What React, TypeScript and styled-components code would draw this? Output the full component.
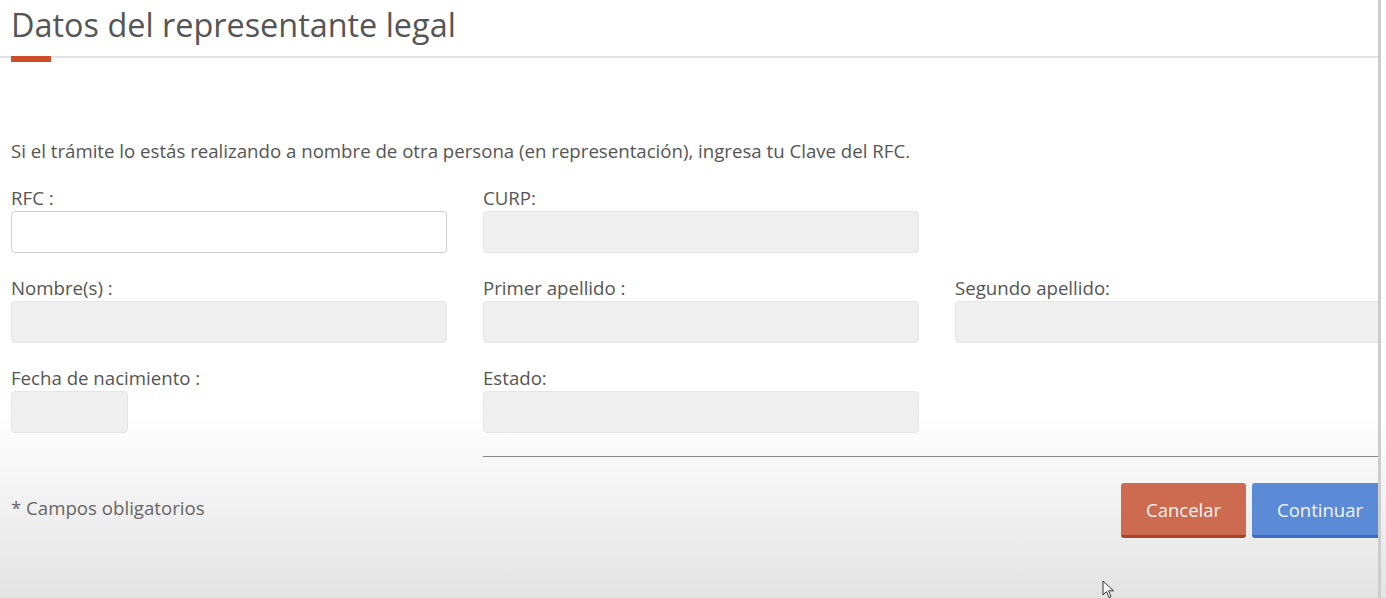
import React from "react";
import styled, { createGlobalStyle } from "styled-components";

const GlobalStyle = createGlobalStyle`
  html, body {
    margin: 0;
    padding: 0;
  }
  body {
    font-family: "Open Sans", "Liberation Sans", sans-serif;
    color: #555;
    background: linear-gradient(to bottom, #fff 0, #fff 410px, #f5f5f5 480px, #e3e3e3 598px);
    min-height: 598px;
  }
`;

const Page = styled.div`
  position: relative;
  width: 1381px;
  height: 598px;
  overflow: hidden;
  border-right: 3px solid #cdcdcd;
  box-sizing: border-box;
  padding-left: 11px;
`;

const Title = styled.h1`
  margin: 0;
  padding-top: 4px;
  font-size: 32.4px;
  font-weight: 400;
  line-height: 40px;
  color: #555;
`;

const TitleRule = styled.div`
  margin: 12px 0 0 -11px;
  height: 2px;
  background: #e3e3e3;
  display: flex;
  padding-left: 11px;
`;

const Accent = styled.span`
  width: 40px;
  height: 6px;
  background: #cc4d28;
`;

const Intro = styled.p`
  margin: 81px 0 0;
  font-size: 18.65px;
  line-height: 24px;
`;

const Grid = styled.div`
  display: grid;
  grid-template-columns: repeat(3, 436px);
  column-gap: 36px;
  row-gap: 23px;
  margin-top: 23px;
`;

const Field = styled.div<{ $col?: number }>`
  display: flex;
  flex-direction: column;
  grid-column: ${(p) => p.$col ?? "auto"};
`;

const Label = styled.label`
  font-size: 18.65px;
  line-height: 24px;
  margin-bottom: 1px;
  color: #555;
`;

const Input = styled.div<{ $disabled?: boolean; $width?: number }>`
  height: 42px;
  box-sizing: border-box;
  width: ${(p) => (p.$width ? `${p.$width}px` : "100%")};
  border-radius: 4px;
  border: 1px solid ${(p) => (p.$disabled ? "#e6e6e6" : "#cfcfcf")};
  background: ${(p) => (p.$disabled ? "#efefef" : "#fff")};
`;

const Rule = styled.hr`
  grid-column: 2 / 4;
  margin: 0;
  border: 0;
  border-top: 1px solid #8a8a8a;
`;

const Footer = styled.div`
  display: flex;
  align-items: center;
  justify-content: space-between;
  margin: 26px -10px 0 0;
`;

const Note = styled.span`
  font-size: 18.65px;
  line-height: 24px;
  padding-bottom: 6px;
  color: #666;
`;

const Actions = styled.div`
  display: flex;
  gap: 6px;
`;

const Button = styled.button<{ $tone: "cancel" | "go" }>`
  height: 55px;
  padding: 0 25px;
  border: 0;
  border-radius: 3px;
  font-family: "Open Sans", "Liberation Sans", sans-serif;
  font-size: 18.5px;
  color: #f4f4f4;
  background: ${(p) => (p.$tone === "go" ? "#5b8bd6" : "#cc6b50")};
  border-bottom: 3px solid ${(p) => (p.$tone === "go" ? "#3d6cc0" : "#a9442a")};
  cursor: pointer;
`;

const Cursor = styled.svg`
  position: absolute;
  left: 1102px;
  top: 580px;
`;

const App: React.FC = () => {
  return (
    <>
      <GlobalStyle />
      <Page>
        <Title>Datos del representante legal</Title>
        <TitleRule>
          <Accent />
        </TitleRule>
        <Intro>
          Si el trámite lo estás realizando a nombre de otra persona (en representación), ingresa tu Clave del RFC.
        </Intro>
        <Grid>
          <Field>
            <Label>RFC :</Label>
            <Input />
          </Field>
          <Field $col={2}>
            <Label>CURP:</Label>
            <Input $disabled />
          </Field>
          <Field $col={1}>
            <Label>Nombre(s) :</Label>
            <Input $disabled />
          </Field>
          <Field>
            <Label>Primer apellido :</Label>
            <Input $disabled />
          </Field>
          <Field>
            <Label>Segundo apellido:</Label>
            <Input $disabled />
          </Field>
          <Field $col={1}>
            <Label>Fecha de nacimiento :</Label>
            <Input $disabled $width={117} />
          </Field>
          <Field>
            <Label>Estado:</Label>
            <Input $disabled />
          </Field>
          <Rule />
        </Grid>
        <Footer>
          <Note>* Campos obligatorios</Note>
          <Actions>
            <Button $tone="cancel">Cancelar</Button>
            <Button $tone="go">Continuar</Button>
          </Actions>
        </Footer>
        <Cursor width="14" height="20" viewBox="0 0 14 20">
          <path d="M1 1 L1 15 L4.5 11.5 L7 17.5 L9 16.6 L6.6 10.8 L11.5 10.8 Z" fill="#fff" stroke="#333" strokeWidth="1" />
        </Cursor>
      </Page>
    </>
  );
};

export default App;
